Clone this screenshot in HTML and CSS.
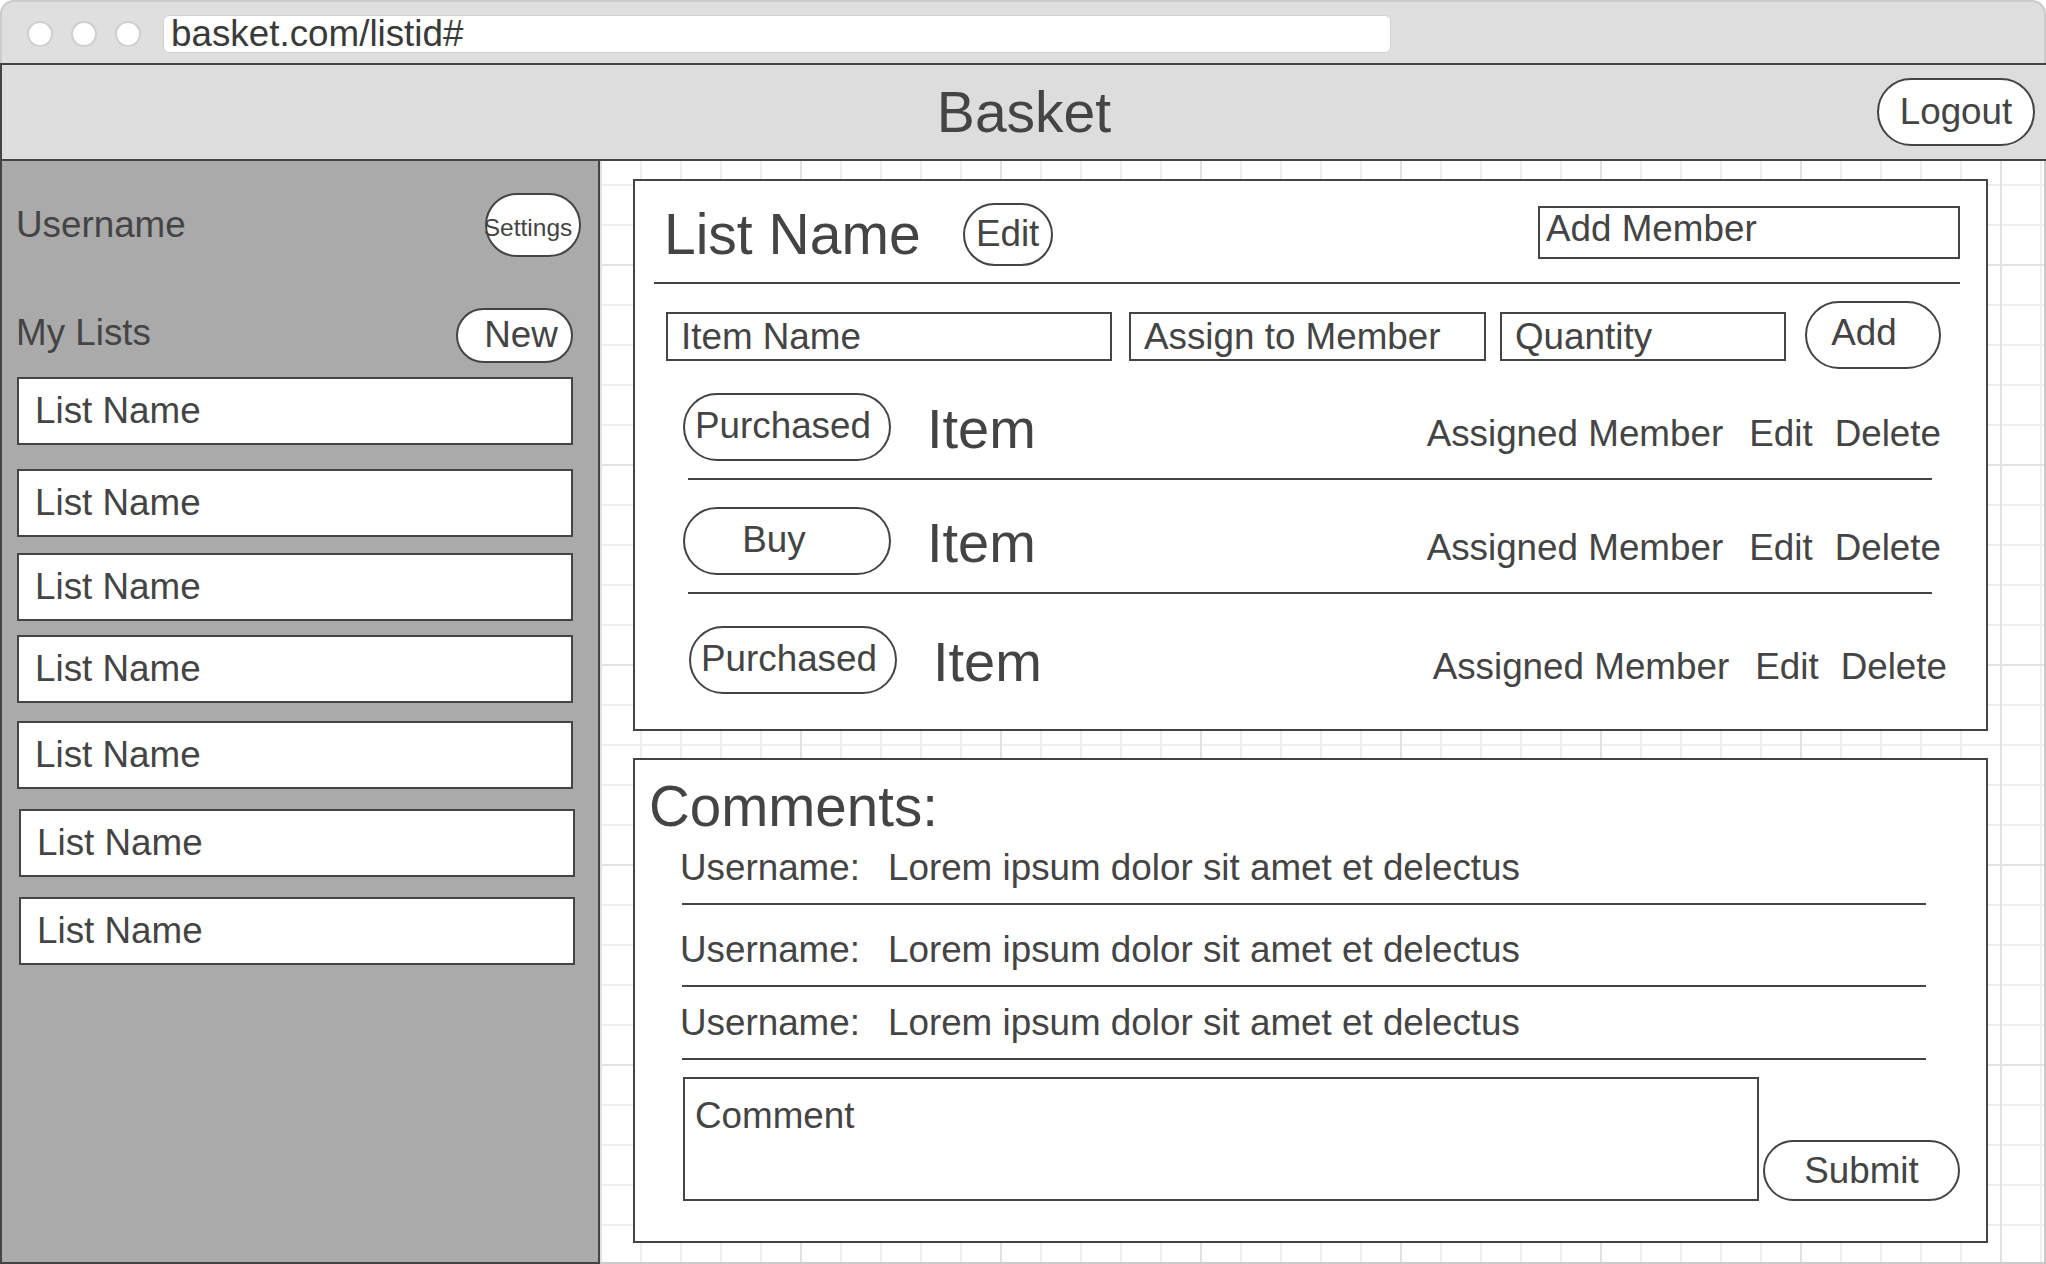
FILE: index.html
```html
<!DOCTYPE html>
<html lang="en">
<head>
<meta charset="utf-8">
<title>Basket</title>
<link rel="stylesheet" href="styles.css">
</head>
<body>
<div class="window">
  <div class="chrome">
    <span class="dot"></span><span class="dot"></span><span class="dot"></span>
    <div class="url">basket.com/listid#</div>
  </div>
  <header class="appbar">
    <div class="appbar-spacer"></div>
    <h1 class="brand">Basket</h1>
    <button class="pill logout">Logout</button>
  </header>
  <div class="body">
    <aside class="sidebar">
      <div class="side-row user-row">
        <span class="side-label">Username</span>
        <button class="pill settings">Settings</button>
      </div>
      <div class="side-row lists-row">
        <span class="side-label mylists">My Lists</span>
        <button class="pill new">New</button>
      </div>
      <ul class="lists">
        <li class="list-link">List Name</li>
        <li class="list-link">List Name</li>
        <li class="list-link">List Name</li>
        <li class="list-link">List Name</li>
        <li class="list-link">List Name</li>
        <li class="list-link">List Name</li>
        <li class="list-link">List Name</li>
      </ul>
    </aside>
    <main class="canvas">
      <section class="panel list-panel">
        <div class="panel-head">
          <h2 class="list-title">List Name</h2>
          <button class="pill edit">Edit</button>
          <div class="field add-member">Add Member</div>
        </div>
        <div class="add-row">
          <div class="field field-center f-name">Item Name</div>
          <div class="field field-center f-assign">Assign to Member</div>
          <div class="field field-center f-qty">Quantity</div>
          <button class="pill add">Add</button>
        </div>
        <div class="item-row">
          <button class="pill status">Purchased</button>
          <span class="item-name">Item</span>
          <div class="item-meta"><span>Assigned Member</span><span class="meta-edit">Edit</span><span class="meta-del">Delete</span></div>
        </div>
        <div class="sep"></div>
        <div class="item-row row-2">
          <button class="pill status buy">Buy</button>
          <span class="item-name">Item</span>
          <div class="item-meta"><span>Assigned Member</span><span class="meta-edit">Edit</span><span class="meta-del">Delete</span></div>
        </div>
        <div class="sep"></div>
        <div class="item-row row-3">
          <button class="pill status">Purchased</button>
          <span class="item-name">Item</span>
          <div class="item-meta"><span>Assigned Member</span><span class="meta-edit">Edit</span><span class="meta-del">Delete</span></div>
        </div>
      </section>
      <section class="panel comments-panel">
        <h2 class="comments-title">Comments:</h2>
        <div class="comment comment-first"><span class="c-user">Username:</span><span class="c-text">Lorem ipsum dolor sit amet et delectus</span></div>
        <div class="comment"><span class="c-user">Username:</span><span class="c-text">Lorem ipsum dolor sit amet et delectus</span></div>
        <div class="comment comment-last"><span class="c-user">Username:</span><span class="c-text">Lorem ipsum dolor sit amet et delectus</span></div>
        <div class="compose">
          <div class="field comment-box">Comment</div>
          <button class="pill submit">Submit</button>
        </div>
      </section>
    </main>
  </div>
</div>
</body>
</html>
```

FILE: styles.css
```css
* {
  box-sizing: border-box;
  margin: 0;
  padding: 0;
}

html, body {
  width: 2046px;
  height: 1264px;
  overflow: hidden;
}

body {
  font-family: "Liberation Sans", Arial, Helvetica, sans-serif;
  color: #444;
  background: #fff;
}

.window {
  width: 2046px;
  height: 1264px;
  display: flex;
  flex-direction: column;
}

/* Browser chrome */
.chrome {
  flex: none;
  height: 63px;
  background: #dfdfdf;
  border: 2px solid #cbcbcb;
  border-bottom: none;
  border-radius: 14px 14px 0 0;
  display: flex;
  align-items: center;
  padding: 2px 0 0 25px;
}

.dot {
  width: 26px;
  height: 26px;
  border-radius: 50%;
  background: #fff;
  border: 2px solid #cfcfcf;
  margin-right: 18px;
}

.url {
  margin-left: 4px;
  width: 1228px;
  height: 38px;
  background: #fff;
  border: 1px solid #d2d2d2;
  border-radius: 6px;
  font-size: 36.8px;
  line-height: 36px;
  padding-left: 7px;
  color: #3a3a3a;
  white-space: nowrap;
}

/* App bar */
.appbar {
  flex: none;
  height: 98px;
  background: #ddd;
  border: 2px solid #444;
  border-right: none;
  display: grid;
  grid-template-columns: 1fr auto 1fr;
  align-items: center;
}

.brand {
  font-size: 57px;
  font-weight: normal;
  line-height: 1;
}

/* Pill buttons */
.pill {
  flex: none;
  background: #fff;
  border: 2px solid #444;
  border-radius: 999px;
  font-family: inherit;
  font-size: 36.8px;
  color: #444;
  line-height: 1;
  padding: 0;
  display: flex;
  align-items: center;
  justify-content: center;
  white-space: nowrap;
}

.logout {
  justify-self: end;
  margin-right: 11px;
  width: 158px;
  height: 68px;
}

/* Body */
.body {
  flex: 1;
  min-height: 0;
  display: flex;
}

.sidebar {
  flex: none;
  width: 600px;
  background: #aaa;
  border: 2px solid #444;
  border-top: none;
  padding: 32px 25px 0 15px;
}

.side-row {
  display: flex;
  align-items: center;
  justify-content: space-between;
}

.side-label {
  font-size: 36.8px;
  margin-left: -1px;
}

.user-row {
  height: 64px;
  margin-right: -8px;
}

.settings {
  width: 96px;
  height: 64px;
  font-size: 24.5px;
  padding: 6px 10px 0 0;
  overflow: visible;
}

.lists-row {
  margin-top: 51px;
  height: 55px;
}

.mylists {
  margin-bottom: 6px;
}

.new {
  width: 117px;
  height: 55px;
  padding-left: 13px;
}

.lists {
  list-style: none;
  display: flex;
  flex-direction: column;
}

.list-link {
  height: 68px;
  background: #fff;
  border: 2px solid #444;
  font-size: 36.8px;
  display: flex;
  align-items: center;
  padding-left: 16px;
}

.list-link:nth-child(1) { margin-top: 14px; }
.list-link:nth-child(2) { margin-top: 24px; }
.list-link:nth-child(3) { margin-top: 16px; }
.list-link:nth-child(4) { margin-top: 14px; }
.list-link:nth-child(5) { margin-top: 18px; }
.list-link:nth-child(6) { margin-top: 20px; margin-left: 2px; margin-right: -2px; }
.list-link:nth-child(7) { margin-top: 20px; margin-left: 2px; margin-right: -2px; }

/* Canvas */
.canvas {
  flex: 1;
  border-right: 2px solid #cbcbcb;
  border-bottom: 2px solid #cbcbcb;
  padding: 18px 0 0 33px;
  background-color: #fff;
  background-image:
    linear-gradient(to right, #e2e2e2 2px, transparent 2px),
    linear-gradient(to bottom, #e2e2e2 2px, transparent 2px),
    linear-gradient(to right, #eeeeee 2px, transparent 2px),
    linear-gradient(to bottom, #eeeeee 2px, transparent 2px);
  background-size: 200px 100%, 100% 200px, 40px 100%, 100% 40px;
  background-position: 0 0, 0 103px, 0 0, 0 23px;
}

.panel {
  width: 1355px;
  background: #fff;
  border: 2px solid #444;
}

.field {
  background: #fff;
  border: 2px solid #444;
  font-size: 36.8px;
  white-space: nowrap;
}

.field-center {
  display: flex;
  align-items: center;
  padding-left: 13px;
  height: 49px;
  margin-top: 3px;
}

/* List panel */
.list-panel {
  padding-bottom: 35px;
}

.panel-head {
  margin: 0 26px 0 19px;
  height: 103px;
  padding-top: 6px;
  border-bottom: 2px solid #444;
  display: flex;
  align-items: center;
}

.list-title {
  font-size: 57px;
  font-weight: normal;
  line-height: 1;
  margin-left: 10px;
  white-space: nowrap;
}

.edit {
  width: 90px;
  height: 63px;
  margin-left: 42px;
}

.add-member {
  margin-left: auto;
  margin-bottom: 4px;
  width: 422px;
  height: 53px;
  padding: 1px 0 0 6px;
  line-height: 40px;
}

.add-row {
  display: flex;
  align-items: center;
  margin: 17px 0 0 31px;
}

.f-name { width: 446px; margin-right: 17px; }
.f-assign { width: 357px; margin-right: 14px; }
.f-qty { width: 286px; margin-right: 19px; }

.add {
  width: 136px;
  height: 68px;
  padding: 0 18px 4px 0;
}

.item-row {
  display: flex;
  align-items: center;
  height: 68px;
  margin: 24px 45px 0 48px;
}

.row-2 { margin-top: 27px; }
.row-3 { margin: 32px 39px 0 54px; }

.status {
  width: 208px;
  height: 68px;
  padding: 0 8px 2px 0;
}

.buy {
  padding-right: 26px;
}

.item-name {
  font-size: 56px;
  line-height: 54px;
  margin-left: 36px;
  padding-top: 4px;
}

.item-meta {
  margin-left: auto;
  display: flex;
  font-size: 36.8px;
  line-height: 36px;
  padding-top: 13px;
  white-space: nowrap;
}

.meta-edit { margin-left: 26px; }
.meta-del { margin-left: 22px; }

.sep {
  height: 2px;
  background: #444;
  margin: 17px 54px 0 53px;
}

/* Comments panel */
.comments-panel {
  margin-top: 27px;
  padding-bottom: 40px;
}

.comments-title {
  font-size: 56.5px;
  font-weight: normal;
  line-height: 56px;
  margin: 19px 0 0 14px;
}

.comment {
  display: flex;
  margin: 0 60px 0 47px;
  padding: 25px 0 15px;
  border-bottom: 2px solid #444;
  font-size: 36.8px;
  line-height: 40px;
  white-space: nowrap;
}

.comment-first { padding-top: 13px; }
.comment-last { padding-top: 16px; }

.c-user { margin-left: -2px; }
.c-text { margin-left: 28px; }

.compose {
  display: flex;
  align-items: flex-end;
  margin: 17px 0 0 48px;
}

.comment-box {
  width: 1076px;
  height: 124px;
  padding: 17px 0 0 10px;
  line-height: 40px;
}

.submit {
  width: 197px;
  height: 61px;
  margin-left: 4px;
  padding-top: 2px;
}
```
